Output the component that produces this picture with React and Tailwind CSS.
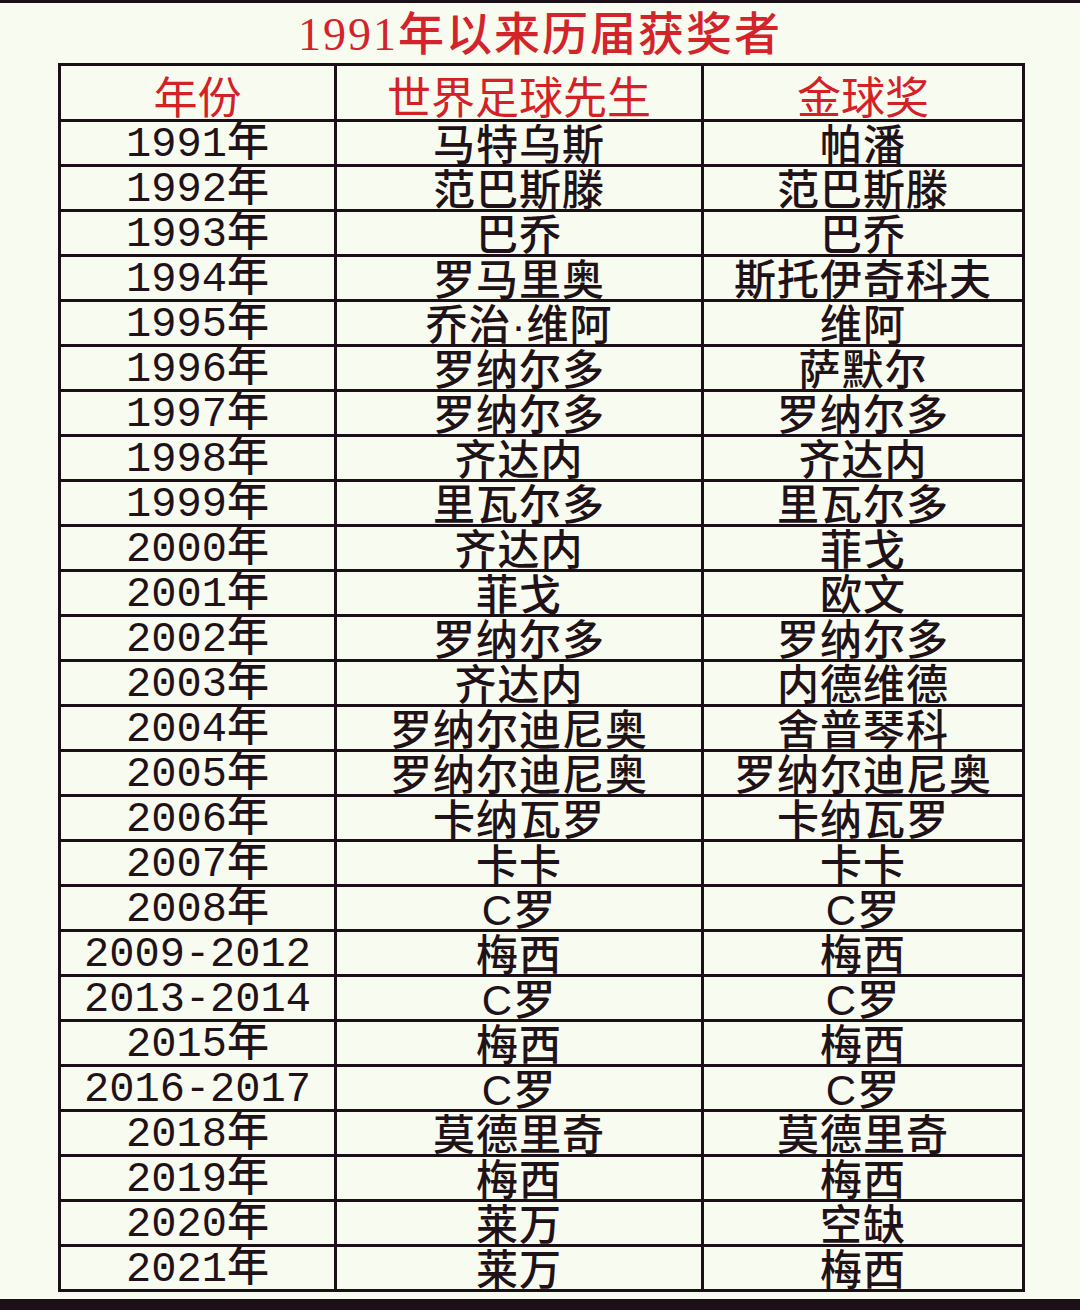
import React from "react";

const rows = [
  ["1991年", "马特乌斯", "帕潘"],
  ["1992年", "范巴斯滕", "范巴斯滕"],
  ["1993年", "巴乔", "巴乔"],
  ["1994年", "罗马里奥", "斯托伊奇科夫"],
  ["1995年", "乔治·维阿", "维阿"],
  ["1996年", "罗纳尔多", "萨默尔"],
  ["1997年", "罗纳尔多", "罗纳尔多"],
  ["1998年", "齐达内", "齐达内"],
  ["1999年", "里瓦尔多", "里瓦尔多"],
  ["2000年", "齐达内", "菲戈"],
  ["2001年", "菲戈", "欧文"],
  ["2002年", "罗纳尔多", "罗纳尔多"],
  ["2003年", "齐达内", "内德维德"],
  ["2004年", "罗纳尔迪尼奥", "舍普琴科"],
  ["2005年", "罗纳尔迪尼奥", "罗纳尔迪尼奥"],
  ["2006年", "卡纳瓦罗", "卡纳瓦罗"],
  ["2007年", "卡卡", "卡卡"],
  ["2008年", "C罗", "C罗"],
  ["2009-2012", "梅西", "梅西"],
  ["2013-2014", "C罗", "C罗"],
  ["2015年", "梅西", "梅西"],
  ["2016-2017", "C罗", "C罗"],
  ["2018年", "莫德里奇", "莫德里奇"],
  ["2019年", "梅西", "梅西"],
  ["2020年", "莱万", "空缺"],
  ["2021年", "莱万", "梅西"],
];

const cell =
  "border-[3px] border-[#1b1018] p-0 pt-[5px] text-center align-middle text-[42px] leading-[37px] font-medium";

const App = () => {
  return (
    <div className="w-[1080px] h-[1310px] bg-[#f8fbef] flex flex-col text-[#1f1218]">
      <div className="h-[3px] bg-[#1b1018]" />
      {/* title */}
      <div className="h-[60px] flex items-center justify-center pt-[4px]">
        <h1 className="text-[46px] leading-none font-medium text-[#d3232b] font-['Liberation_Serif','Noto_Sans_CJK_SC',serif] tracking-[2px]">
          1991年以来历届获奖者
        </h1>
      </div>

      <div className="pl-[58px]">
        <table className="border-collapse table-fixed w-[964px]">
          <colgroup>
            <col className="w-[276px]" />
            <col className="w-[367px]" />
            <col className="w-[321px]" />
          </colgroup>
          <thead>
            <tr className="h-[56px]">
              {["年份", "世界足球先生", "金球奖"].map((h) => (
                <th
                  key={h}
                  className="border-[3px] border-[#1b1018] p-0 pt-[4px] text-center align-middle font-normal text-[44px] leading-[44px] text-[#d42027] font-['Noto_Sans_CJK_SC',sans-serif]"
                >
                  {h}
                </th>
              ))}
            </tr>
          </thead>
          <tbody>
            {rows.map((r) => (
              <tr key={r[0]} className="h-[45px]">
                <td
                  className={`${cell} font-['Liberation_Mono','Noto_Sans_CJK_SC',monospace]`}
                >
                  {r[0]}
                </td>
                <td className={`${cell} tracking-[1px] font-['Liberation_Sans','Noto_Sans_CJK_SC',sans-serif]`}>
                  {r[1]}
                </td>
                <td className={`${cell} tracking-[1px] font-['Liberation_Sans','Noto_Sans_CJK_SC',sans-serif]`}>
                  {r[2]}
                </td>
              </tr>
            ))}
          </tbody>
        </table>
      </div>

      <div className="flex-1" />
      <div className="h-[11px] bg-[#1b1018]" />
    </div>
  );
};

export default App;
